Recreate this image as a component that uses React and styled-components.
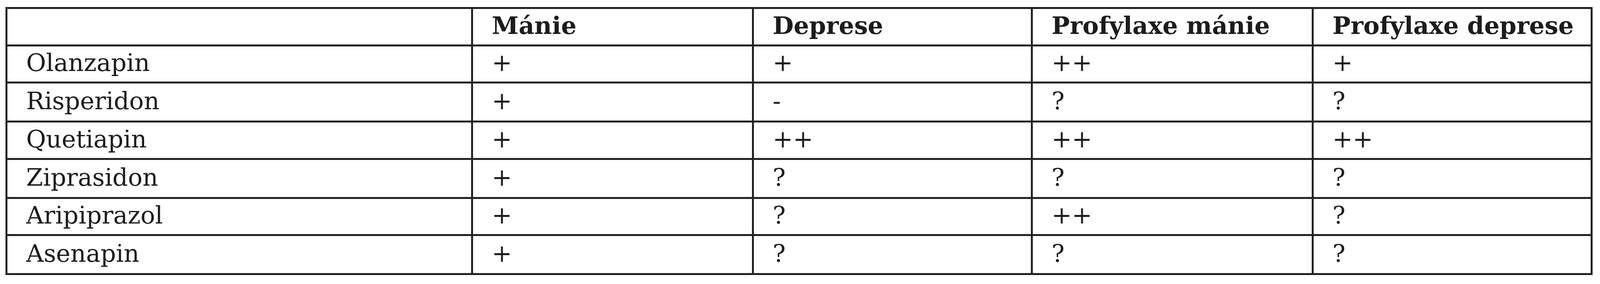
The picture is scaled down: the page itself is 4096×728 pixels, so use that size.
import React from "react";
import styled, { createGlobalStyle } from "styled-components";

const GlobalStyle = createGlobalStyle`
  html, body {
    margin: 0;
    padding: 0;
    background: #ffffff;
  }
  body {
    font-family: "DejaVu Serif", "Liberation Serif", serif;
    color: #1c1c1c;
  }
`;

const columns = [
  { title: "", width: 1187 },
  { title: "Mánie", width: 714 },
  { title: "Deprese", width: 709 },
  { title: "Profylaxe mánie", width: 714 },
  { title: "Profylaxe deprese", width: 709 },
];

// rows alternate slightly in height, as in the rasterised original
const rows = [
  { name: "Olanzapin", values: ["+", "+", "++", "+"], height: 90 },
  { name: "Risperidon", values: ["+", "-", "?", "?"], height: 95 },
  { name: "Quetiapin", values: ["+", "++", "++", "++"], height: 91 },
  { name: "Ziprasidon", values: ["+", "?", "?", "?"], height: 95 },
  { name: "Aripiprazol", values: ["+", "?", "++", "?"], height: 90 },
  { name: "Asenapin", values: ["+", "?", "?", "?"], height: 95 },
];

const Page = styled.div`
  padding: 18px 0 0 14px;
`;

const Table = styled.table`
  table-layout: fixed;
  border-collapse: separate;
  border-spacing: 5px;
  width: 4063px;
  background: #222222;
`;

const Row = styled.tr`
  height: ${(p) => p.$height}px;
`;

const Cell = styled.td`
  box-sizing: border-box;
  background: #ffffff;
  padding: 0 0 6px 48px;
  vertical-align: middle;
  font-size: 62px;
  line-height: 62px;
  white-space: nowrap;
  font-weight: ${(p) => (p.$head ? 700 : 400)};
`;

const App = () => {
  return (
    <Page>
      <GlobalStyle />
      <Table>
        <colgroup>
          {columns.map((col, index) => (
            <col key={index} style={{ width: col.width }} />
          ))}
        </colgroup>
        <thead>
          <Row $height={91}>
            {columns.map((col, index) => (
              <Cell as="th" key={index} $head style={{ textAlign: "left" }}>
                {col.title}
              </Cell>
            ))}
          </Row>
        </thead>
        <tbody>
          {rows.map((row, rowIndex) => (
            <Row key={rowIndex} $height={row.height}>
              <Cell>{row.name}</Cell>
              {row.values.map((value, valueIndex) => (
                <Cell key={valueIndex}>{value}</Cell>
              ))}
            </Row>
          ))}
        </tbody>
      </Table>
    </Page>
  );
};

export default App;
